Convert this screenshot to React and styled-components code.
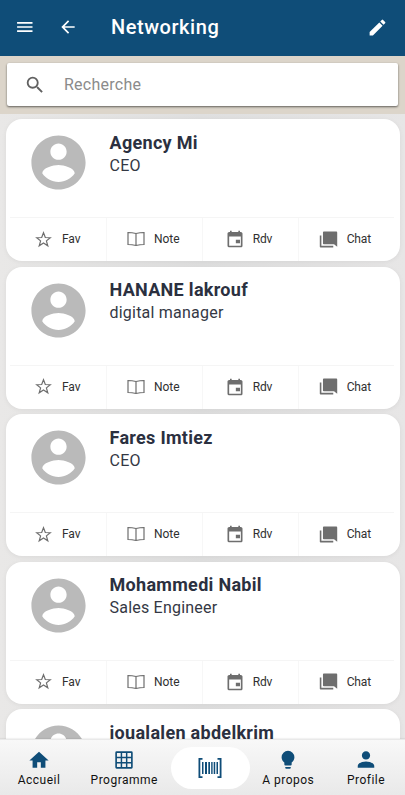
import React from "react";
import styled, { createGlobalStyle } from "styled-components";

const GlobalStyle = createGlobalStyle`
  * { box-sizing: border-box; }
  body { margin: 0; font-family: Roboto, sans-serif; }
`;

const Screen = styled.div`
  width: 100%;
  height: 795px;
  display: flex;
  flex-direction: column;
  overflow: hidden;
  background: linear-gradient(90deg, #e9e8e7, #dfdfdf 50%, #e7e6e6);
`;

const Header = styled.header`
  height: 56px;
  flex: none;
  display: flex;
  align-items: center;
  padding: 0 17.5px 2px 15px;
  background: #0f4d78;
  color: #fff;
`;

const IconButton = styled.button`
  display: flex;
  padding: 0;
  margin: 0 ${(p) => p.$after || 0}px 0 0;
  border: 0;
  background: none;
  color: inherit;
`;

const Title = styled.h1`
  flex: 1;
  margin: 0;
  font-size: 20px;
  line-height: 24px;
  font-weight: 500;
  letter-spacing: 0.55px;
`;

const Icon = styled.svg`
  display: block;
  flex: none;
  width: ${(p) => p.$w || p.$size || 20}px;
  height: ${(p) => p.$size || 20}px;
  fill: currentColor;
`;

const SearchBand = styled.div`
  flex: none;
  height: 58px;
  padding: 7px 7px 0;
  background: #dcd5ca;
`;

const SearchBox = styled.label`
  height: 43px;
  display: flex;
  align-items: center;
  gap: 18px;
  padding: 0 17px;
  background: #fff;
  color: #616161;
  border-radius: 2px;
  box-shadow: 0 1px 2px rgba(0, 0, 0, 0.45), 0 1px 3px rgba(0, 0, 0, 0.15);
`;

const SearchInput = styled.input`
  flex: 1;
  min-width: 0;
  padding: 0;
  border: 0;
  outline: 0;
  background: none;
  font: 400 16px/20px Roboto, sans-serif;
  letter-spacing: 0.25px;
  &::placeholder { color: #8b8b8b; opacity: 1; }
`;

const List = styled.main`
  flex: 1;
  min-height: 0;
  overflow: hidden;
  display: flex;
  flex-direction: column;
  gap: 5.5px;
  padding: 5px 5.5px 0;
`;

const Card = styled.article`
  flex: none;
  height: 142px;
  display: flex;
  flex-direction: column;
  border-radius: 16px;
  background: #fff;
  box-shadow: 0 1px 5px rgba(0, 0, 0, 0.06);
`;

const Person = styled.div`
  flex: 1;
  display: flex;
  gap: 19px;
  padding: 11px 20px 0;
  color: #bababa;
`;

const Name = styled.h2`
  margin: 1.9px 0 0;
  font-size: 18px;
  line-height: 22px;
  font-weight: 700;
  letter-spacing: 0.3px;
  color: #2b3040;
`;

const Role = styled.p`
  margin: 1.1px 0 0;
  font-size: 16px;
  line-height: 22px;
  letter-spacing: 0.22px;
  color: #343844;
`;

const Actions = styled.div`
  height: 44px;
  margin: 0 6px 0 4.5px;
  display: grid;
  grid-template-columns: repeat(4, 1fr);
  border-top: 1px solid #f5f5f5;
`;

const Action = styled.button`
  display: flex;
  align-items: center;
  padding: 0 0 1px ${(p) => p.$start}px;
  border: 0;
  background: none;
  color: #6e6e6e;
  & + & { border-left: 1px solid #f7f7f7; }
`;

const ActionIcon = styled.span`
  width: ${(p) => p.$w || 27}px;
  display: flex;
`;

const ActionText = styled.span`
  font: 400 12px/16px Roboto, sans-serif;
  letter-spacing: ${(p) => p.$spacing || 0}px;
  color: #303030;
`;

const Nav = styled.nav`
  flex: none;
  height: 56px;
  display: flex;
  align-items: center;
  padding-top: 1px;
  background: linear-gradient(#f8f8f8, #e9e9e9);
  border-top: 1px solid #e9e9e9;
  box-shadow: 0 -1px 1px rgba(0, 0, 0, 0.05);
  z-index: 1;
`;

const NavItem = styled.a`
  width: ${(p) => p.$w}px;
  flex: none;
  display: flex;
  flex-direction: column;
  align-items: center;
  gap: 1px;
  color: #0f4d78;
`;

const NavText = styled.span`
  font-size: 12px;
  line-height: 16px;
  letter-spacing: 0.5px;
  color: #111;
`;

const ScanButton = styled.button`
  width: 79px;
  height: 42px;
  flex: none;
  display: flex;
  align-items: center;
  justify-content: center;
  padding: 0 1px 0 0;
  border: 0;
  border-radius: 21px;
  background: #fff;
  color: #0f4d78;
`;

const people = [
  ["Agency Mi", "CEO"],
  ["HANANE lakrouf", "digital manager"],
  ["Fares Imtiez", "CEO"],
  ["Mohammedi Nabil", "Sales Engineer"],
  ["ioualalen abdelkrim", ""],
];

const Glyph = ({ d, size = 20 }) => (
  <Icon $size={size} viewBox="0 0 24 24"><path d={d} /></Icon>
);

const BookIcon = () => (
  <Icon $w={18} $size={16} viewBox="0 0 18 16">
    <path d="M1 1.5Q5 1.5 9 2.5Q13 1.5 17 1.5V13.5Q13 13.5 9 14.5Q5 13.5 1 13.5ZM9 2.5V14.5" fill="none" stroke="currentColor" strokeWidth="1.2" />
  </Icon>
);

const StarIcon = () => (
  <Icon $w={17} $size={17} viewBox="0 0 17 17">
    <path d="M8.5 1.8L10.3 6.5L15.3 6.7L11.4 9.9L12.8 14.8L8.5 12L4.2 14.8L5.6 9.9L1.7 6.7L6.7 6.5Z" fill="none" stroke="currentColor" strokeWidth="1.2" />
  </Icon>
);

const BarcodeIcon = () => (
  <Icon $w={24} $size={20} viewBox="0 0 24 20">
    <path d="M0.5 0h4v1.8H2.3v16.4h2.2V20h-4zM23.5 0h-4v1.8h2.2v16.4h-2.2V20h4zM4 4h1.5v12H4zM7 4h2v12H7zM10.3 4h1.7v12h-1.7zM13.2 4h1.4v12h-1.4zM15.7 4h1.5v12h-1.5zM18.5 4h1.5v12h-1.5z" />
  </Icon>
);

const paths = {
  menu: "M2.5 18h18.5v-2H2.5v2zm0-5h18.5v-2H2.5v2zm0-7v2h18.5V6H2.5z",
  back: "M20 11H7.83l5.59-5.59L12 4l-8 8 8 8 1.41-1.41L7.83 13H20v-2z",
  edit: "M3 17.25V21h3.75L17.81 9.94l-3.75-3.75L3 17.25zM20.71 7.04a1 1 0 0 0 0-1.41l-2.34-2.34a1 1 0 0 0-1.41 0l-1.83 1.83 3.75 3.75 1.83-1.83z",
  search: "M15.5 14h-.79l-.28-.27A6.47 6.47 0 0 0 16 9.5 6.5 6.5 0 1 0 9.5 16c1.61 0 3.09-.59 4.23-1.57l.27.28v.79l5 4.99L20.49 19l-4.99-5zm-6 0C7.01 14 5 11.99 5 9.5S7.01 5 9.5 5 14 7.01 14 9.5 11.99 14 9.5 14z",
  account: "M12 2C6.48 2 2 6.48 2 12s4.48 10 10 10 10-4.48 10-10S17.52 2 12 2zm0 3c1.66 0 3 1.34 3 3s-1.34 3-3 3-3-1.34-3-3 1.34-3 3-3zm0 14.2c-2.5 0-4.71-1.28-6-3.22.03-1.99 4-3.08 6-3.08 1.99 0 5.97 1.09 6 3.08-1.29 1.94-3.5 3.22-6 3.22z",
  event: "M18 13h-5v4h5v-4zM16 2v1.5H8V2H6v1.5H5c-1.11 0-2 .9-2 2V20a2 2 0 0 0 2 2h14c1.1 0 2-.9 2-2V5.5c0-1.1-.9-2-2-2h-1V2h-2zm3 18H5V9h14v11z",
  chat: "M3 7H1v14c0 .55.45 1 1 1h16v-2H3V7zM22 2H6c-.55 0-1 .45-1 1v14c0 .55.45 1 1 1h13l4 3V3c0-.55-.45-1-1-1z",
  home: "M10 20.5v-6h4v6h5v-8h3.5L12 3 1.5 12.5H5v8z",
  grid: "M4 2.5h16a1.5 1.5 0 0 1 1.5 1.5v16a1.5 1.5 0 0 1-1.5 1.5H4A1.5 1.5 0 0 1 2.5 20V4A1.5 1.5 0 0 1 4 2.5zm.3 1.8v4.1h4.1V4.3zm5.7 0v4.1h4.1V4.3zm5.7 0v4.1h4V4.3zM4.3 10v4.1h4.1V10zm5.7 0v4.1h4.1V10zm5.7 0v4.1h4V10zM4.3 15.7v4h4.1v-4zm5.7 0v4h4.1v-4zm5.7 0v4h4v-4z",
  bulb: "M12 2a7 7 0 0 0-7 7c0 2.4 1.2 4.5 3 5.7V17c0 .6.4 1 1 1h6c.6 0 1-.4 1-1v-2.3c1.8-1.2 3-3.3 3-5.7a7 7 0 0 0-7-7zM9 19.5v1c0 .6.4 1 1 1h4c.6 0 1-.4 1-1v-1z",
  person: "M12 11.5c2.5 0 4.5-2 4.5-4.5s-2-4.5-4.5-4.5-4.5 2-4.5 4.5 2 4.5 4.5 4.5zm0 2.2c-3 0-9 1.5-9 4.5v2.3h18v-2.3c0-3-6-4.5-9-4.5z",
};

function PersonCard({ name, role }) {
  return (
    <Card>
      <Person>
        <Glyph d={paths.account} size={65} />
        <div>
          <Name>{name}</Name>
          {role && <Role>{role}</Role>}
        </div>
      </Person>
      <Actions>
        <Action $start={25}><ActionIcon><StarIcon /></ActionIcon><ActionText $spacing={-0.1}>Fav</ActionText></Action>
        <Action $start={20}><ActionIcon><BookIcon /></ActionIcon><ActionText>Note</ActionText></Action>
        <Action $start={22}><ActionIcon $w={28}><Glyph d={paths.event} size={20} /></ActionIcon><ActionText $spacing={-0.15}>Rdv</ActionText></Action>
        <Action $start={20.5}><ActionIcon $w={27.5}><Glyph d={paths.chat} size={19} /></ActionIcon><ActionText $spacing={-0.1}>Chat</ActionText></Action>
      </Actions>
    </Card>
  );
}

export default function App() {
  return (
    <Screen>
      <GlobalStyle />
      <Header>
        <IconButton $after={23} aria-label="Menu"><Glyph d={paths.menu} size={20} /></IconButton>
        <IconButton $after={33} aria-label="Back"><Glyph d={paths.back} size={20} /></IconButton>
        <Title>Networking</Title>
        <IconButton aria-label="Edit"><Glyph d={paths.edit} size={21} /></IconButton>
      </Header>
      <SearchBand>
        <SearchBox>
          <Glyph d={paths.search} size={22} />
          <SearchInput placeholder="Recherche" />
        </SearchBox>
      </SearchBand>
      <List>
        {people.map(([name, role]) => <PersonCard key={name} name={name} role={role} />)}
      </List>
      <Nav>
        <NavItem $w={78}><Glyph d={paths.home} size={22} /><NavText>Accueil</NavText></NavItem>
        <NavItem $w={92.5}><Glyph d={paths.grid} size={22} /><NavText>Programme</NavText></NavItem>
        <ScanButton aria-label="Scan"><BarcodeIcon /></ScanButton>
        <NavItem $w={77.5}><Glyph d={paths.bulb} size={22} /><NavText>A propos</NavText></NavItem>
        <NavItem $w={78}><Glyph d={paths.person} size={22} /><NavText>Profile</NavText></NavItem>
      </Nav>
    </Screen>
  );
}
